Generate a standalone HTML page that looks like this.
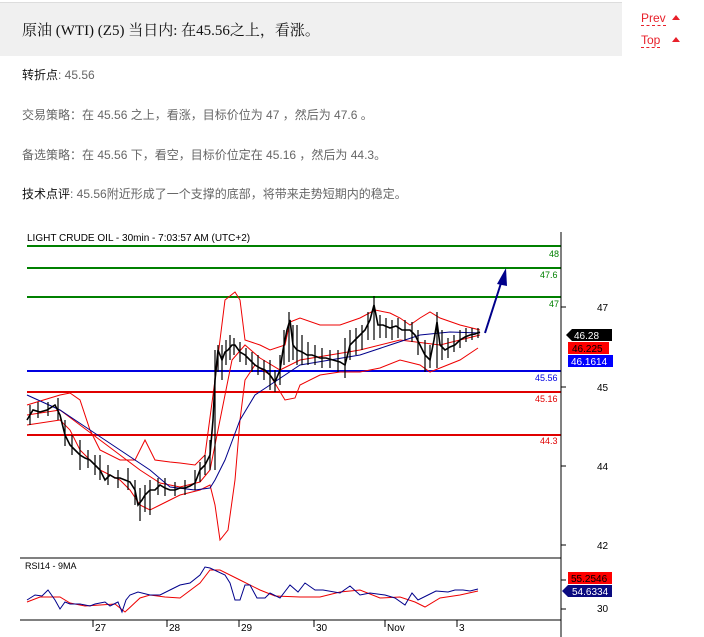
<!DOCTYPE html><html><head><meta charset="utf-8"><style>
body{margin:0;width:704px;height:637px;background:#fff;font-family:"Liberation Sans","Noto Sans CJK SC",sans-serif;position:relative;overflow:hidden}
.hd{position:absolute;left:0;top:2px;width:622px;height:53px;background:#f0f0f0;border-top:1px solid #ddd}
.hd span{position:absolute;left:22px;top:16px;font-size:15px;font-family:"Liberation Serif","Noto Serif CJK SC",serif;color:#111}
.nav{position:absolute;left:641px;font-size:12px;color:#e8202a;border-bottom:1px dashed #e8202a;line-height:14px}
.tri{position:absolute;width:0;height:0;border-left:4px solid transparent;border-right:4px solid transparent;border-bottom:5px solid #e8202a}
.p{position:absolute;left:22px;font-size:12px;color:#666}
.p b{font-weight:normal;color:#111}
</style></head><body>
<div class="hd"><span>原油 (WTI) (Z5) 当日内: 在45.56之上，看涨。</span></div>
<div class="nav" style="top:11px">Prev</div><div class="tri" style="top:15px;left:672px"></div>
<div class="nav" style="top:33px">Top</div><div class="tri" style="top:37px;left:672px"></div>
<div class="p" style="top:66px"><b>转折点</b>: 45.56</div>
<div class="p" style="top:106px">交易策略：在 45.56 之上，看涨，目标价位为 47 ，然后为 47.6 。</div>
<div class="p" style="top:146px">备选策略：在 45.56 下，看空，目标价位定在 45.16 ，然后为 44.3。</div>
<div class="p" style="top:185px"><b>技术点评</b>: 45.56附近形成了一个支撑的底部，将带来走势短期内的稳定。</div>
<svg style="position:absolute;left:0;top:0" width="704" height="637" font-family="Liberation Sans,sans-serif">
<text x="27" y="241" font-size="10" fill="#000">LIGHT CRUDE OIL - 30min - 7:03:57 AM (UTC+2)</text>
<g stroke-width="2"><line x1="27" y1="246" x2="561" y2="246" stroke="#008000"/><line x1="27" y1="268" x2="561" y2="268" stroke="#008000"/><line x1="27" y1="297" x2="561" y2="297" stroke="#008000"/>
<line x1="27" y1="371" x2="561" y2="371" stroke="#0000e0"/><line x1="27" y1="392" x2="561" y2="392" stroke="#e00000"/><line x1="27" y1="435" x2="561" y2="435" stroke="#e00000"/></g>
<g font-size="9"><text x="549" y="257" fill="#008000">48</text><text x="540" y="278" fill="#008000">47.6</text><text x="549" y="307" fill="#008000">47</text>
<text x="535" y="381" fill="#0000e0">45.56</text><text x="535" y="402" fill="#e00000">45.16</text><text x="540" y="444" fill="#e00000">44.3</text></g>
<line x1="561" y1="232" x2="561" y2="637" stroke="#000"/>
<line x1="20" y1="558" x2="561" y2="558" stroke="#000"/><line x1="20" y1="620" x2="561" y2="620" stroke="#000"/>
<g stroke="#000"><line x1="561" y1="307" x2="566" y2="307"/><line x1="561" y1="387" x2="566" y2="387"/><line x1="561" y1="466" x2="566" y2="466"/><line x1="561" y1="545" x2="566" y2="545"/><line x1="561" y1="580" x2="566" y2="580"/><line x1="561" y1="609" x2="566" y2="609"/></g>
<g font-size="10" fill="#000"><text x="597" y="311">47</text><text x="597" y="391">45</text><text x="597" y="470">44</text><text x="597" y="549">42</text><text x="597" y="612">30</text>
<text x="95" y="631">27</text><text x="169" y="631">28</text><text x="241" y="631">29</text><text x="316" y="631">30</text><text x="387" y="631">Nov</text><text x="459" y="631">3</text></g>
<g stroke="#000"><line x1="93" y1="620" x2="93" y2="627"/><line x1="167" y1="620" x2="167" y2="627"/><line x1="239" y1="620" x2="239" y2="627"/><line x1="314" y1="620" x2="314" y2="627"/><line x1="385" y1="620" x2="385" y2="627"/><line x1="457" y1="620" x2="457" y2="627"/></g>
<polygon points="566,335 572,329 612,329 612,341 572,341" fill="#000"/><text x="574" y="339" font-size="10" fill="#fff">46.28</text>
<rect x="568" y="342" width="41" height="12" fill="#f00"/><text x="572" y="352" font-size="10" fill="#000">46.225</text>
<rect x="568" y="355" width="45" height="12" fill="#00f"/><text x="571" y="365" font-size="10" fill="#fff">46.1614</text>
<rect x="568" y="572" width="44" height="12" fill="#f00"/><text x="571" y="582" font-size="10" fill="#000">55.2546</text>
<polygon points="562,591 568,585 612,585 612,597 568,597" fill="#0a0a80"/><text x="572" y="595" font-size="10" fill="#fff">54.6334</text>
<text x="25" y="569" font-size="9" fill="#000">RSI14 - 9MA</text>
<g fill="none" stroke="#e00" stroke-width="1">
<polyline points="27,405 60,395 70,393 80,400 90,430 100,450 120,460 135,460 145,440 155,460 170,462 180,463 195,465 205,455 215,380 225,300 235,292 240,300 245,340 260,345 270,350 285,345 290,322 300,318 320,325 340,325 360,318 375,310 390,313 400,318 410,325 420,318 430,312 440,318 460,325 480,330"/>
<polyline points="27,425 60,420 70,430 80,450 90,460 100,470 120,480 130,490 140,505 150,510 160,505 170,500 180,495 200,490 210,485 215,505 220,540 228,530 235,480 240,420 245,380 255,365 270,375 285,400 295,398 300,385 320,375 340,372 360,372 380,368 400,360 420,365 430,372 440,368 460,360 478,348"/>
<polyline points="27,415 60,410 80,425 100,440 120,455 140,470 160,483 180,487 200,482 210,470 220,420 232,360 245,345 260,358 280,370 300,360 330,355 360,350 400,340 440,345 480,335"/>
<polyline points="27,602 40,597 60,597 70,603 85,606 100,605 115,604 125,612 140,598 150,595 165,597 180,598 200,583 210,570 220,570 240,580 260,590 275,596 300,597 320,597 340,592 360,590 380,598 400,597 415,602 425,607 440,598 460,595 478,591"/>
</g>
<g fill="none" stroke="#00008b" stroke-width="1">
<polyline points="27,395 60,410 90,430 120,450 150,470 170,487 195,490 210,488 215,480 225,460 240,420 255,395 270,385 285,375 300,365 330,360 360,355 390,345 420,335 450,332 480,333"/>
<polyline points="27,600 35,595 42,596 48,590 55,600 60,609 65,602 70,604 80,604 90,606 95,604 105,602 110,606 118,602 122,612 126,600 130,595 138,592 150,595 160,595 170,590 180,585 190,583 200,575 205,567 210,568 225,575 230,583 235,600 240,600 245,585 250,585 257,598 265,598 270,593 280,598 290,585 298,592 305,583 315,590 323,590 340,593 350,586 360,595 370,593 385,595 395,598 405,605 412,593 418,600 428,595 436,591 448,592 455,590 463,590 470,591 478,589"/>
</g>
<g fill="none" stroke="#000" stroke-width="1.6">
<polyline points="27,420 33,410 40,412 47,410 55,405 60,415 65,435 70,445 75,450 80,455 85,458 90,460 95,465 100,470 105,480 110,475 115,478 120,478 125,480 130,482 135,490 138,505 142,500 145,495 150,490 155,490 160,485 165,488 170,490 175,490 180,488 185,488 190,486 195,483 200,470 205,465 210,455 213,420 215,380 218,350 222,360 225,352 228,350 232,345 235,345 240,352 245,355 250,360 255,365 260,368 265,370 270,375 275,382 280,370 283,350 287,330 290,320 293,345 297,350 302,352 307,355 312,355 320,358 326,358 333,360 340,362 345,365 350,345 355,340 360,335 365,330 370,320 374,305 378,325 383,325 390,328 396,326 402,330 410,330 415,335 420,345 425,355 430,360 434,340 437,322 440,345 445,350 450,347 455,345 460,340 465,337 470,335 475,334 480,332"/>
</g>
<g stroke="#000" stroke-width="1.2">
<line x1="30" y1="405" x2="30" y2="425"/><line x1="38" y1="402" x2="38" y2="418"/><line x1="48" y1="402" x2="48" y2="416"/><line x1="58" y1="398" x2="58" y2="420"/><line x1="65" y1="420" x2="65" y2="446"/><line x1="72" y1="435" x2="72" y2="455"/><line x1="80" y1="440" x2="80" y2="470"/><line x1="88" y1="450" x2="88" y2="468"/><line x1="95" y1="455" x2="95" y2="475"/><line x1="100" y1="455" x2="100" y2="480"/><line x1="108" y1="465" x2="108" y2="485"/><line x1="118" y1="470" x2="118" y2="488"/><line x1="128" y1="468" x2="128" y2="490"/><line x1="135" y1="480" x2="135" y2="505"/><line x1="140" y1="488" x2="140" y2="521"/><line x1="145" y1="485" x2="145" y2="512"/><line x1="150" y1="480" x2="150" y2="515"/><line x1="158" y1="478" x2="158" y2="495"/><line x1="165" y1="478" x2="165" y2="496"/><line x1="175" y1="482" x2="175" y2="496"/><line x1="185" y1="480" x2="185" y2="495"/><line x1="195" y1="470" x2="195" y2="490"/><line x1="200" y1="462" x2="200" y2="482"/><line x1="205" y1="455" x2="205" y2="475"/><line x1="210" y1="440" x2="210" y2="470"/><line x1="215" y1="350" x2="215" y2="470"/><line x1="218" y1="345" x2="218" y2="372"/><line x1="222" y1="345" x2="222" y2="380"/><line x1="226" y1="340" x2="226" y2="365"/><line x1="230" y1="335" x2="230" y2="360"/><line x1="234" y1="338" x2="234" y2="355"/><line x1="240" y1="342" x2="240" y2="362"/><line x1="246" y1="348" x2="246" y2="365"/><line x1="252" y1="352" x2="252" y2="372"/><line x1="258" y1="355" x2="258" y2="375"/><line x1="264" y1="360" x2="264" y2="380"/><line x1="270" y1="360" x2="270" y2="390"/><line x1="275" y1="370" x2="275" y2="392"/><line x1="280" y1="355" x2="280" y2="385"/><line x1="284" y1="330" x2="284" y2="365"/><line x1="289" y1="312" x2="289" y2="362"/><line x1="293" y1="325" x2="293" y2="360"/><line x1="297" y1="325" x2="297" y2="365"/><line x1="302" y1="335" x2="302" y2="365"/><line x1="308" y1="342" x2="308" y2="365"/><line x1="315" y1="345" x2="315" y2="365"/><line x1="322" y1="348" x2="322" y2="368"/><line x1="330" y1="350" x2="330" y2="368"/><line x1="338" y1="350" x2="338" y2="372"/><line x1="345" y1="338" x2="345" y2="378"/><line x1="350" y1="330" x2="350" y2="360"/><line x1="356" y1="328" x2="356" y2="355"/><line x1="362" y1="325" x2="362" y2="350"/><line x1="368" y1="312" x2="368" y2="340"/><line x1="374" y1="296" x2="374" y2="340"/><line x1="380" y1="315" x2="380" y2="338"/><line x1="386" y1="318" x2="386" y2="338"/><line x1="392" y1="320" x2="392" y2="340"/><line x1="398" y1="318" x2="398" y2="338"/><line x1="405" y1="320" x2="405" y2="340"/><line x1="412" y1="322" x2="412" y2="342"/><line x1="418" y1="330" x2="418" y2="355"/><line x1="425" y1="340" x2="425" y2="372"/><line x1="430" y1="345" x2="430" y2="368"/><line x1="437" y1="312" x2="437" y2="368"/><line x1="442" y1="330" x2="442" y2="360"/><line x1="448" y1="338" x2="448" y2="358"/><line x1="454" y1="335" x2="454" y2="352"/><line x1="460" y1="330" x2="460" y2="348"/><line x1="466" y1="328" x2="466" y2="342"/><line x1="472" y1="328" x2="472" y2="340"/><line x1="478" y1="328" x2="478" y2="338"/></g>
<line x1="485" y1="333" x2="502" y2="280" stroke="#00008b" stroke-width="2"/>
<polygon points="506,268 497,284 507,286" fill="#00008b"/>
</svg>
</body></html>
